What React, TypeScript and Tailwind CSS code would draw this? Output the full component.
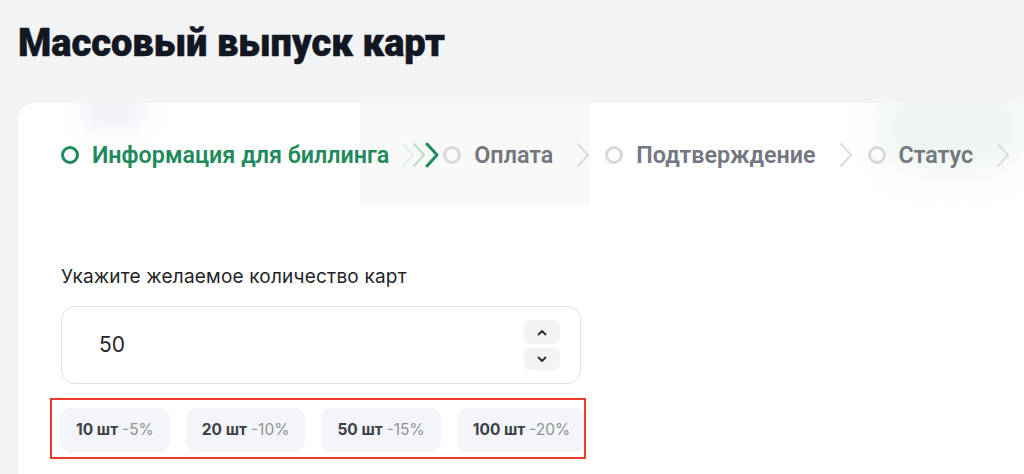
import React from 'react';

const STEPS = [
    { id: 1, title: 'Информация для биллинга', active: true },
    { id: 2, title: 'Оплата', active: false },
    { id: 3, title: 'Подтверждение', active: false },
    { id: 4, title: 'Статус', active: false },
];

const PRESETS = [
    { qty: '10 шт', discount: '-5%' },
    { qty: '20 шт', discount: '-10%' },
    { qty: '50 шт', discount: '-15%' },
    { qty: '100 шт', discount: '-20%' },
];

function Chevron({ color, width = 2 }: { color: string; width?: number }) {
    return (
        <svg width="14" height="26" viewBox="0 0 14 26" fill="none">
            <polyline points="2,2 12,13 2,24" stroke={color} strokeWidth={width} strokeLinecap="round" strokeLinejoin="round" />
        </svg>
    );
}

function SmallChevron({ up }: { up?: boolean }) {
    return (
        <svg width="10" height="7" viewBox="0 0 10 7" fill="none">
            <polyline
                points={up ? '1.5,5.5 5,2 8.5,5.5' : '1.5,1.5 5,5 8.5,1.5'}
                stroke="#2a2d33"
                strokeWidth="1.8"
                strokeLinecap="round"
                strokeLinejoin="round"
            />
        </svg>
    );
}

export default function App() {
    return (
        <div className="h-[474px] overflow-hidden bg-[#f2f3f5] pl-[18px] pt-[21px] font-['Inter',sans-serif]">
            <h1 className="font-['Roboto',sans-serif] text-[38px] font-black leading-[44px] text-[#131722] [-webkit-text-stroke:0.5px_#131722]">
                Массовый выпуск карт
            </h1>

            <div className="relative mt-[38px] h-[400px] overflow-hidden rounded-tl-[16px] bg-white pl-[43px] pt-[32px]">
                {/* faint background decoration */}
                <div className="pointer-events-none absolute left-[60px] top-[-10px] h-[40px] w-[70px] rounded-full bg-[#e4e8f3] opacity-50 blur-[10px]" />
                <div className="pointer-events-none absolute left-[342px] top-0 h-[102px] w-[230px] bg-[#f7f8f4] opacity-70" />
                <div className="pointer-events-none absolute left-[860px] top-[-20px] h-[90px] w-[150px] rounded-full bg-[#e6f0ea] opacity-70 blur-[18px]" />

                {/* Stepper */}
                <div className="relative flex h-[40px] items-center font-['Roboto',sans-serif] text-[23.3px] font-semibold">
                    {STEPS.map((step, i) => (
                        <React.Fragment key={step.id}>
                            <div
                                className={`h-[18px] w-[18px] shrink-0 rounded-full ${step.active ? 'border-[3.5px] border-[#1f8a5c]' : 'border-[3px] border-[#d6d8dc]'}`}
                            />
                            <span className={`ml-[13px] whitespace-nowrap ${step.active ? 'text-[#1f8a5c]' : 'text-[#74777f]'}`}>
                                {step.title}
                            </span>
                            {i === 0 ? (
                                <div className="ml-[12px] mr-[4px] flex items-center">
                                    <div className="-mr-[3px]"><Chevron color="#e3efe8" /></div>
                                    <div className="-mr-[1px]"><Chevron color="#b9dcc9" /></div>
                                    <Chevron color="#1f8a5c" width={3} />
                                </div>
                            ) : (
                                <div className="ml-[23px] mr-[15px]">
                                    <Chevron color="#dadcdf" />
                                </div>
                            )}
                        </React.Fragment>
                    ))}
                </div>

                {/* Quantity */}
                <div className="relative mt-[90px] w-[520px]">
                    <label className="block text-[19px] leading-[24px] tracking-[0.2px] text-[#1f2329]">
                        Укажите желаемое количество карт
                    </label>

                    <div className="mt-[17px] flex h-[78px] items-center justify-between rounded-[14px] border border-[#dde3e0] pl-[37px] pr-[20px]">
                        <span className="text-[21px] text-[#22252b]">50</span>
                        <div className="flex flex-col gap-[4px]">
                            <button className="flex h-[24px] w-[36px] items-center justify-center rounded-md bg-[#f3f4f6]">
                                <SmallChevron up />
                            </button>
                            <button className="flex h-[22px] w-[36px] items-center justify-center rounded-md bg-[#f3f4f6]">
                                <SmallChevron />
                            </button>
                        </div>
                    </div>

                    <div className="relative -ml-[1px] mt-[24px] flex gap-4">
                        {PRESETS.map((p) => (
                            <button
                                key={p.qty}
                                className="flex h-[44px] items-center rounded-[10px] bg-[#f4f5f8] px-4 text-[15.5px] whitespace-nowrap"
                            >
                                <span className="font-bold text-[#3d4148]">{p.qty}</span>
                                <span className="ml-[4px] text-[#8e9197]">{p.discount}</span>
                            </button>
                        ))}
                        {/* annotation frame */}
                        <div className="pointer-events-none absolute -bottom-[7px] -left-[10px] -right-[5px] -top-[10px] border-[2.5px] border-[#ea3b2b]" />
                    </div>
                </div>
            </div>
        </div>
    );
}
